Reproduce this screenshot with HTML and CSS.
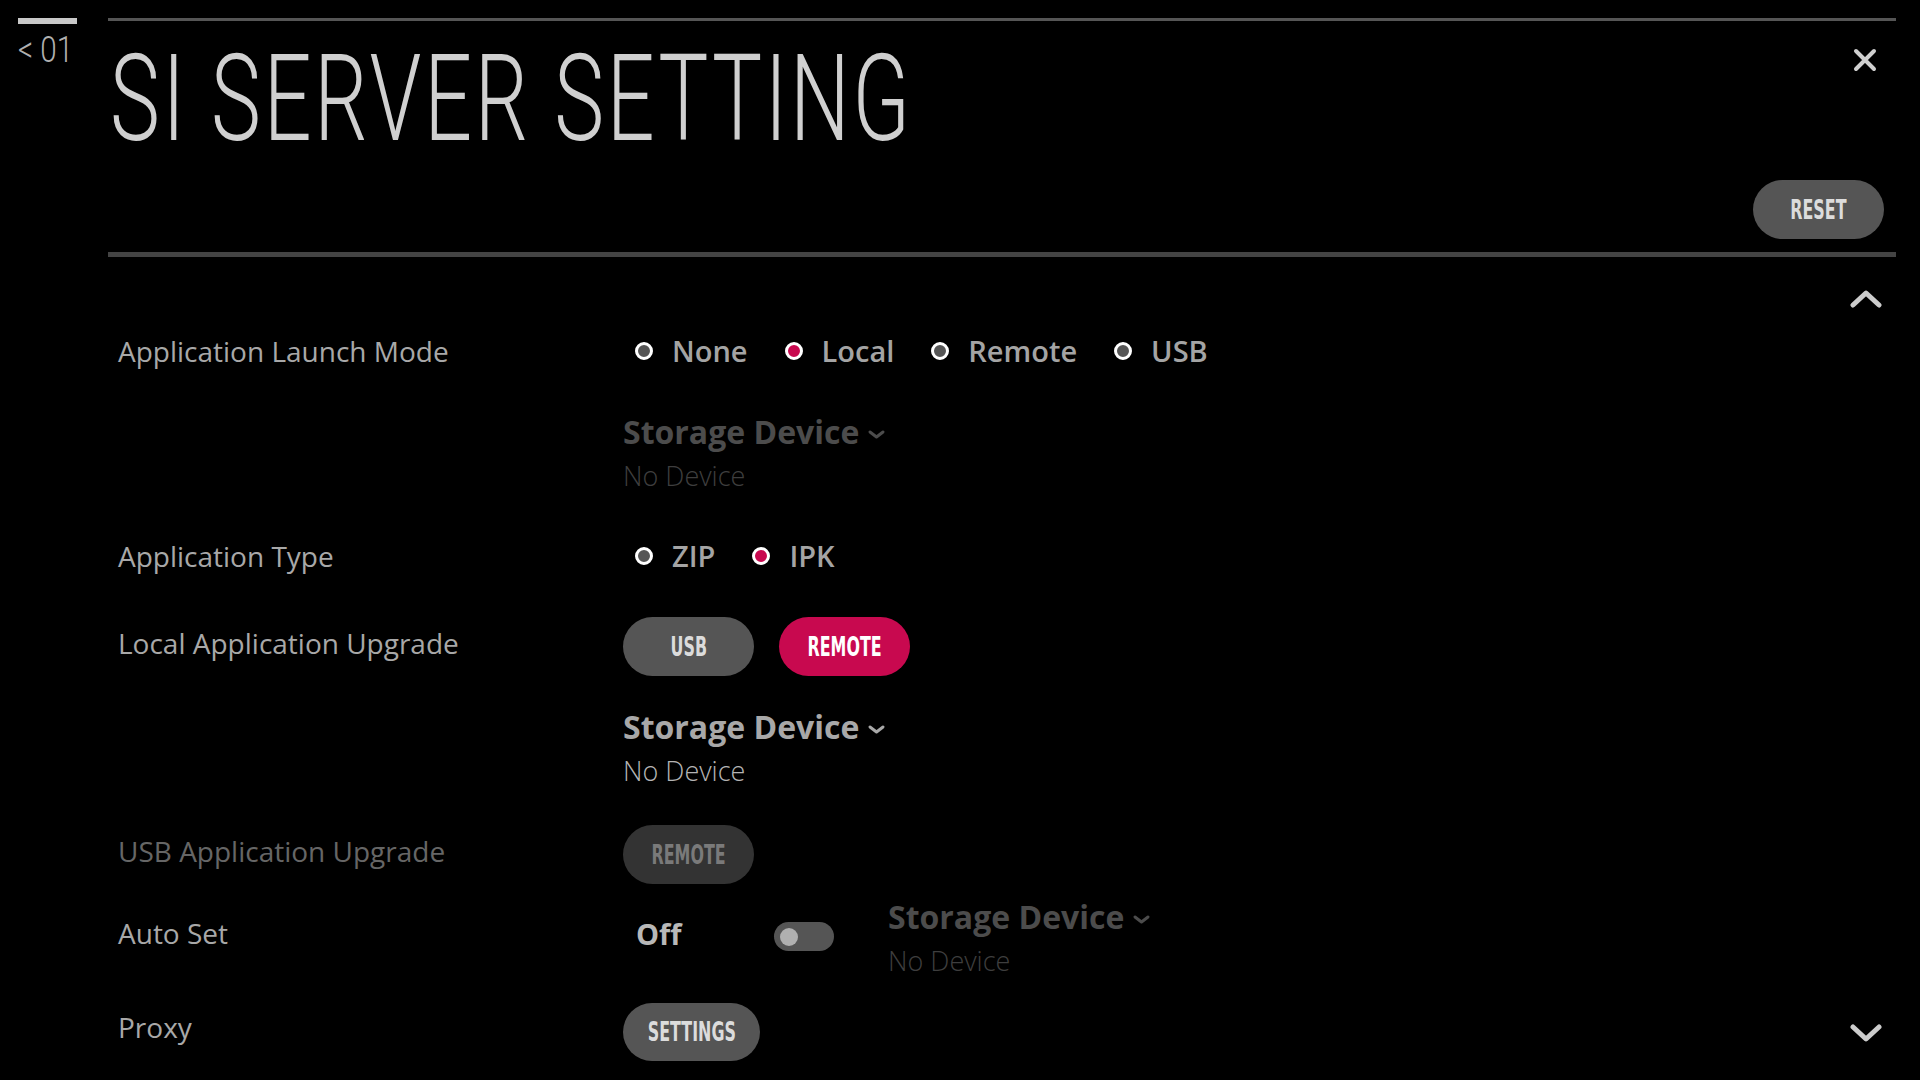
FILE: index.html
```html
<!DOCTYPE html>
<html lang="en">
<head>
<meta charset="utf-8">
<title>SI Server Setting</title>
<link rel="stylesheet" href="styles.css">
</head>
<body>
<div class="screen">
  <aside class="side">
    <div class="side-bar"></div>
    <div class="page-num"><span class="page-num-text">&lt; 01</span></div>
  </aside>
  <main class="panel">
    <header class="head">
      <div class="title-row">
        <h1 class="title"><span class="title-text">SI SERVER SETTING</span></h1>
        <button class="close" aria-label="Close">
          <svg width="24" height="24" viewBox="0 0 24 24"><path d="M3 3 L21 21 M21 3 L3 21" stroke="#d0d0d0" stroke-width="4" stroke-linecap="round" fill="none"/></svg>
        </button>
      </div>
      <div class="reset-row">
        <button class="pill pill-reset"><span class="cond">RESET</span></button>
      </div>
    </header>

    <section class="list">
      <svg class="scroll scroll-up" width="32" height="18" viewBox="0 0 32 18"><polyline points="3,15 16,3 29,15" stroke="#cccccc" stroke-width="5" stroke-linecap="round" stroke-linejoin="round" fill="none"/></svg>

      <div class="row row-launch">
        <div class="label">Application Launch Mode</div>
        <div class="radios">
          <span class="radio"><span class="dot"></span>None</span>
          <span class="radio"><span class="dot on"></span>Local</span>
          <span class="radio"><span class="dot"></span>Remote</span>
          <span class="radio"><span class="dot"></span>USB</span>
        </div>
      </div>

      <div class="storage sub dim storage-1">
        <div class="storage-title">Storage Device<svg class="caret" width="19" height="11" viewBox="0 0 19 11"><polyline points="3,3 9.5,8 16,3" stroke="currentColor" stroke-width="3" stroke-linecap="round" stroke-linejoin="round" fill="none"/></svg></div>
        <div class="storage-value">No Device</div>
      </div>

      <div class="row row-type">
        <div class="label">Application Type</div>
        <div class="radios">
          <span class="radio"><span class="dot"></span>ZIP</span>
          <span class="radio"><span class="dot on"></span>IPK</span>
        </div>
      </div>

      <div class="row row-btn row-local">
        <div class="label label-btn">Local Application Upgrade</div>
        <div class="buttons">
          <button class="pill"><span class="cond">USB</span></button>
          <button class="pill pill-red"><span class="cond">REMOTE</span></button>
        </div>
      </div>

      <div class="storage sub storage-2">
        <div class="storage-title">Storage Device<svg class="caret" width="19" height="11" viewBox="0 0 19 11"><polyline points="3,3 9.5,8 16,3" stroke="currentColor" stroke-width="3" stroke-linecap="round" stroke-linejoin="round" fill="none"/></svg></div>
        <div class="storage-value">No Device</div>
      </div>

      <div class="row row-btn row-usb">
        <div class="label label-btn label-dim">USB Application Upgrade</div>
        <div class="buttons">
          <button class="pill pill-off"><span class="cond">REMOTE</span></button>
        </div>
      </div>

      <div class="row row-auto">
        <div class="label label-auto">Auto Set</div>
        <div class="auto-ctrl">
          <span class="off-text">Off</span>
          <span class="toggle"><span class="knob"></span></span>
          <div class="storage dim auto-storage">
            <div class="storage-title">Storage Device<svg class="caret" width="19" height="11" viewBox="0 0 19 11"><polyline points="3,3 9.5,8 16,3" stroke="currentColor" stroke-width="3" stroke-linecap="round" stroke-linejoin="round" fill="none"/></svg></div>
            <div class="storage-value">No Device</div>
          </div>
        </div>
      </div>

      <div class="row row-btn row-proxy">
        <div class="label label-proxy">Proxy</div>
        <div class="buttons">
          <button class="pill pill-settings"><span class="cond">SETTINGS</span></button>
        </div>
      </div>

      <svg class="scroll scroll-down" width="32" height="18" viewBox="0 0 32 18"><polyline points="3,3 16,15 29,3" stroke="#cccccc" stroke-width="5" stroke-linecap="round" stroke-linejoin="round" fill="none"/></svg>
    </section>
  </main>
</div>
</body>
</html>
```
FILE: styles.css
```css
* { box-sizing: border-box; }

html, body {
  margin: 0;
  padding: 0;
  background: #000;
}

body {
  width: 1920px;
  height: 1080px;
  overflow: hidden;
  font-family: "Open Sans", "Lato", sans-serif;
  color: #a8a8a8;
}

.screen {
  display: flex;
  width: 1920px;
  height: 1080px;
}

/* left page indicator */
.side {
  width: 108px;
  flex: none;
  padding: 18px 0 0 18px;
}

.side-bar {
  width: 59px;
  height: 6px;
  background: #c8c8c8;
}

.page-num {
  margin-top: 8px;
  height: 36px;
  font-family: "Roboto", sans-serif;
  font-weight: 300;
  font-size: 37px;
  line-height: 36px;
  color: #b0b0b0;
  white-space: nowrap;
}

.page-num-text {
  display: inline-block;
  transform: scaleX(0.8);
  transform-origin: left center;
}

/* main panel */
.panel {
  flex: 1;
  margin-right: 24px;
  display: flex;
  flex-direction: column;
}

.head {
  margin-top: 18px;
  border-top: 3px solid #555;
  border-bottom: 5px solid #444;
  padding-bottom: 13px;
}

.title-row {
  display: flex;
  justify-content: space-between;
  align-items: flex-start;
  margin-top: 18px;
  height: 120px;
}

.title {
  margin: 0 0 0 2px;
  font-family: "Roboto", sans-serif;
  font-weight: 300;
  font-size: 120px;
  line-height: 120px;
  color: #d0d0d0;
  white-space: nowrap;
}

.title-text {
  display: inline-block;
  transform: scaleX(0.70);
  transform-origin: left center;
  letter-spacing: 4px;
}

.close {
  margin: 9px 19px 0 0;
  padding: 0;
  border: 0;
  background: transparent;
  width: 24px;
  height: 24px;
  display: block;
}

.close svg { display: block; }

.reset-row {
  margin-top: 21px;
  display: flex;
  justify-content: flex-end;
}

.pill-reset { margin-right: 12px; }

/* pill buttons */
.pill {
  width: 131px;
  height: 59px;
  border-radius: 30px;
  border: 0;
  padding: 0;
  background: #555;
  color: #dcdcdc;
  display: flex;
  align-items: center;
  justify-content: center;
  font-family: "Liberation Sans Narrow", "DejaVu Sans Condensed", sans-serif;
  font-weight: 700;
  font-size: 26px;
  line-height: 1;
}

.cond {
  display: inline-block;
  transform: scaleX(0.68);
  transform-origin: center;
  white-space: nowrap;
}

.pill-red {
  background: #c8094f;
  color: #fff;
}

.pill-off {
  background: #333;
  color: #7a7a7a;
}

.pill-settings { width: 137px; height: 58px; }

/* list */
.list {
  position: relative;
  flex: 1;
  padding-left: 10px;
}

.scroll {
  position: absolute;
  right: 14px;
  display: block;
}

.scroll-up { top: 33px; }
.scroll-down { top: 767px; }

.row {
  display: flex;
  align-items: center;
}

.row-btn { align-items: flex-start; }

.label {
  width: 505px;
  flex: none;
  font-size: 28px;
  line-height: 40px;
  font-weight: 400;
  color: #a8a8a8;
  white-space: nowrap;
}

.label-btn { margin-top: 6px; }
.label-proxy { margin-top: 4px; }
.label-dim { color: #666; }

.row-launch { margin-top: 74px; height: 40px; }
.storage-1 { margin-top: 41px; }
.row-type { margin-top: 42px; height: 40px; }
.row-local { margin-top: 41px; }
.storage-2 { margin-top: 31px; }
.row-usb { margin-top: 36px; }
.row-auto { margin-top: 13px; align-items: flex-start; }
.row-proxy { margin-top: 24px; }

.radios {
  display: flex;
  align-items: center;
  gap: 37px;
  padding-left: 12px;
}

.radio {
  display: flex;
  align-items: center;
  gap: 19px;
  font-size: 29px;
  line-height: 40px;
  font-weight: 600;
  color: #a4a4a4;
}

.dot {
  width: 18px;
  height: 18px;
  border-radius: 50%;
  border: 3px solid #fff;
  background: #555;
  flex: none;
}

.dot.on { background: #c8094f; }

.buttons {
  display: flex;
  gap: 25px;
}

/* storage device block */
.sub { margin-left: 505px; }

.storage-title {
  display: flex;
  align-items: center;
  font-size: 32px;
  line-height: 40px;
  font-weight: 700;
  color: #a8a8a8;
  white-space: nowrap;
}

.caret { margin-left: 8px; margin-top: 4px; }

.storage-value {
  margin-top: 6px;
  font-size: 27px;
  line-height: 36px;
  font-weight: 300;
  color: #b4b4b4;
}

.storage.dim .storage-title { color: #4c4c4c; }
.storage.dim .storage-value { color: #3e3e3e; }

/* auto set */
.label-auto { margin-top: 16px; }

.auto-ctrl {
  display: flex;
  align-items: flex-start;
}

.off-text {
  margin: 17px 0 0 13px;
  width: 138px;
  font-size: 29px;
  line-height: 40px;
  font-weight: 700;
  color: #b8b8b8;
}

.toggle {
  margin-top: 25px;
  width: 60px;
  height: 29px;
  border-radius: 15px;
  background: #555;
  display: flex;
  align-items: center;
  padding-left: 6px;
}

.knob {
  width: 18px;
  height: 18px;
  border-radius: 50%;
  background: #b0b0b0;
}

.auto-storage { margin-left: 54px; }
```
